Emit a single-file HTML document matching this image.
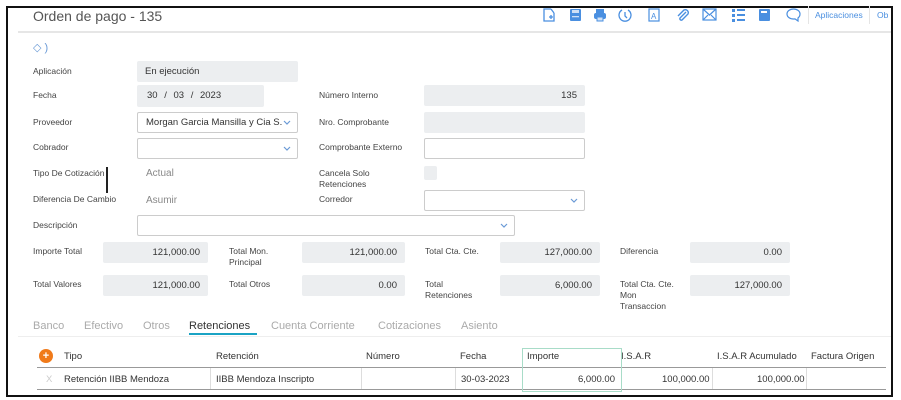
<!DOCTYPE html>
<html><head><meta charset="utf-8"><style>
*{margin:0;padding:0;box-sizing:border-box}
body{width:901px;height:400px;background:#fff;font-family:"Liberation Sans",sans-serif;position:relative;overflow:hidden;color:#333}
.a{position:absolute;white-space:nowrap}
.frame{position:absolute;left:6px;top:6px;width:887px;height:391px;border:2px solid #111}
.lb{position:absolute;font-size:8.5px;color:#444;line-height:11px;white-space:nowrap}
.g{position:absolute;background:#eceef0;border-radius:2px;font-size:9.5px;color:#333;line-height:21px;padding:0 8px;white-space:nowrap;overflow:hidden}
.w{position:absolute;background:#fff;border:1px solid #ccc;border-radius:2px;font-size:9.5px;line-height:19px;padding:0 8px;white-space:nowrap;overflow:hidden}
.r{text-align:right}
.chev{position:absolute;right:6px;top:7px}
.ic{position:absolute;top:8px}
.tab{position:absolute;top:320px;font-size:11px;color:#aaa}
.th{position:absolute;top:351px;font-size:9.5px;color:#333}
.td{position:absolute;top:374px;font-size:9.5px;color:#333}
</style></head><body>
<div class="frame"></div>
<div class="a" style="left:33px;top:8px;font-size:14px;color:#555">Orden de pago - 135</div>
<div class="a" style="left:18px;top:31px;width:873px;height:2px;background:#e6e6e6"></div>
<svg class="ic" style="left:543px" width="13" height="14" viewBox="0 0 13 14" fill="none" stroke="#4a8fe0" stroke-width="1.3"><path d="M8 1H1v12h10V5M8 1l3 4M6 9h4M8 7v4"/></svg>
<svg class="ic" style="left:569px" width="13" height="14" viewBox="0 0 13 14"><rect x="1" y="1" width="11" height="12" rx="1" fill="#4a8fe0"/><rect x="3" y="2" width="7" height="3" fill="#cfe0f6"/><rect x="3" y="8" width="7" height="1.3" fill="#cfe0f6"/></svg>
<svg class="ic" style="left:593px" width="14" height="14" viewBox="0 0 14 14"><rect x="3" y="1" width="8" height="4" fill="#4a8fe0"/><rect x="1" y="5" width="12" height="6" rx="2" fill="#4a8fe0"/><rect x="4" y="9" width="6" height="4" fill="#cfe0f6" stroke="#4a8fe0"/></svg>
<svg class="ic" style="left:618px" width="14" height="14" viewBox="0 0 14 14" fill="none" stroke="#4a8fe0" stroke-width="1.3"><path d="M4 2a6 6 0 1 0 6 0M7 4v4l2 2"/></svg>
<svg class="ic" style="left:648px" width="12" height="14" viewBox="0 0 12 14" fill="none" stroke="#4a8fe0" stroke-width="1.2"><rect x="1" y="1" width="10" height="12"/><text x="3" y="11" font-size="8" fill="#4a8fe0" stroke="none" font-family="Liberation Sans">A</text></svg>
<svg class="ic" style="left:676px" width="14" height="14" viewBox="0 0 14 14" fill="none" stroke="#4a8fe0" stroke-width="1.4"><path d="M10 4L4 10a1.5 1.5 0 0 0 2 2l6-6a3 3 0 0 0-4-4L2 8"/></svg>
<svg class="ic" style="left:702px" width="15" height="13" viewBox="0 0 15 13" fill="none" stroke="#4a8fe0" stroke-width="1.2"><rect x="1" y="1" width="13" height="11"/><path d="M1 1l6.5 6L14 1M1 12l5-5M14 12l-5-5"/></svg>
<svg class="ic" style="left:731px" width="14" height="14" viewBox="0 0 14 14" fill="#4a8fe0"><rect x="1" y="1" width="3" height="3"/><rect x="1" y="6" width="3" height="3"/><rect x="1" y="11" width="3" height="3"/><rect x="6" y="6" width="8" height="2"/><rect x="6" y="11" width="8" height="2"/><rect x="6" y="1" width="8" height="2"/></svg>
<svg class="ic" style="left:758px" width="13" height="14" viewBox="0 0 13 14"><rect x="1" y="1" width="11" height="12" rx="1" fill="#4a8fe0"/><rect x="3" y="3" width="6" height="2" fill="#fff"/></svg>
<svg class="ic" style="left:786px" width="15" height="14" viewBox="0 0 15 14" fill="none" stroke="#4a8fe0" stroke-width="1.2"><path d="M7.5 1C4 1 1 3 1 6s3 5 6.5 5c.5 0 1 0 1.5-.1L12 13v-3c1.3-1 2-2.5 2-4 0-3-3-5-6.5-5z"/></svg>
<div class="a" style="left:808px;top:6px;width:1px;height:18px;background:#e5e5e5"></div>
<div class="a" style="left:815px;top:10px;font-size:8.5px;color:#4a8fe0">Aplicaciones</div>
<div class="a" style="left:869px;top:6px;width:1px;height:18px;background:#e5e5e5"></div>
<div class="a" style="left:877px;top:10px;font-size:8.5px;color:#4a8fe0">Ob</div>
<div class="a" style="left:33px;top:41px;font-size:11px;color:#6a9ad6">&#9671; )</div>

<div class="lb" style="left:33px;top:66px">Aplicación</div>
<div class="g" style="left:137px;top:61px;width:161px;height:21px">En ejecución</div>
<div class="lb" style="left:33px;top:90px">Fecha</div>
<div class="g" style="left:137px;top:85px;width:127px;height:22px;padding-left:10px;word-spacing:4px">30 / 03 / 2023</div>
<div class="lb" style="left:319px;top:90px">Número Interno</div>
<div class="g r" style="left:424px;top:85px;width:161px;height:21px">135</div>
<div class="lb" style="left:33px;top:117px">Proveedor</div>
<div class="w" style="left:137px;top:112px;width:161px;height:21px;padding-right:20px">Morgan Garcia Mansilla y Cia S.<svg class="chev" width="8" height="6" viewBox="0 0 8 6"><path d="M1 1l3 3 3-3" fill="none" stroke="#6a9ad6" stroke-width="1.2"/></svg></div>
<div class="lb" style="left:319px;top:117px">Nro. Comprobante</div>
<div class="g" style="left:424px;top:112px;width:161px;height:21px"></div>
<div class="lb" style="left:33px;top:142px">Cobrador</div>
<div class="w" style="left:137px;top:138px;width:161px;height:21px"><svg class="chev" width="8" height="6" viewBox="0 0 8 6"><path d="M1 1l3 3 3-3" fill="none" stroke="#6a9ad6" stroke-width="1.2"/></svg></div>
<div class="lb" style="left:319px;top:142px">Comprobante Externo</div>
<div class="w" style="left:424px;top:138px;width:161px;height:21px"></div>
<div class="lb" style="left:33px;top:168px">Tipo De Cotización</div>
<div class="a" style="left:106px;top:167px;width:2px;height:26px;background:#222"></div>
<div class="a" style="left:146px;top:168px;font-size:10px;color:#888">Actual</div>
<div class="lb" style="left:319px;top:168px">Cancela Solo<br>Retenciones</div>
<div class="g" style="left:424px;top:166px;width:13px;height:14px;padding:0"></div>
<div class="lb" style="left:33px;top:194px">Diferencia De Cambio</div>
<div class="a" style="left:146px;top:195px;font-size:10px;color:#888">Asumir</div>
<div class="lb" style="left:319px;top:194px">Corredor</div>
<div class="w" style="left:424px;top:190px;width:161px;height:21px"><svg class="chev" width="8" height="6" viewBox="0 0 8 6"><path d="M1 1l3 3 3-3" fill="none" stroke="#6a9ad6" stroke-width="1.2"/></svg></div>
<div class="lb" style="left:33px;top:220px">Descripción</div>
<div class="w" style="left:137px;top:215px;width:378px;height:21px"><svg class="chev" width="8" height="6" viewBox="0 0 8 6"><path d="M1 1l3 3 3-3" fill="none" stroke="#6a9ad6" stroke-width="1.2"/></svg></div>

<div class="lb" style="left:33px;top:246px">Importe Total</div>
<div class="g r" style="left:103px;top:242px;width:105px;height:21px">121,000.00</div>
<div class="lb" style="left:229px;top:246px">Total Mon.<br>Principal</div>
<div class="g r" style="left:302px;top:242px;width:103px;height:21px">121,000.00</div>
<div class="lb" style="left:425px;top:246px">Total Cta. Cte.</div>
<div class="g r" style="left:500px;top:242px;width:100px;height:21px">127,000.00</div>
<div class="lb" style="left:620px;top:246px">Diferencia</div>
<div class="g r" style="left:690px;top:242px;width:100px;height:21px">0.00</div>
<div class="lb" style="left:33px;top:279px">Total Valores</div>
<div class="g r" style="left:103px;top:275px;width:105px;height:21px">121,000.00</div>
<div class="lb" style="left:229px;top:279px">Total Otros</div>
<div class="g r" style="left:302px;top:275px;width:103px;height:21px">0.00</div>
<div class="lb" style="left:425px;top:279px">Total<br>Retenciones</div>
<div class="g r" style="left:500px;top:275px;width:100px;height:21px">6,000.00</div>
<div class="lb" style="left:620px;top:279px">Total Cta. Cte.<br>Mon<br>Transaccion</div>
<div class="g r" style="left:690px;top:275px;width:100px;height:21px">127,000.00</div>

<div class="tab" style="left:33px">Banco</div>
<div class="tab" style="left:84px">Efectivo</div>
<div class="tab" style="left:143px">Otros</div>
<div class="tab" style="left:189px;color:#333">Retenciones</div>
<div class="a" style="left:189px;top:333px;width:68px;height:2px;background:#1aa3c4"></div>
<div class="tab" style="left:271px">Cuenta Corriente</div>
<div class="tab" style="left:378px">Cotizaciones</div>
<div class="tab" style="left:461px">Asiento</div>
<div class="a" style="left:18px;top:336px;width:873px;height:1px;background:#eee"></div>

<div class="a" style="left:39px;top:349px;width:14px;height:14px;border-radius:50%;background:#f07a1a;color:#fff;font-size:11px;line-height:14px;text-align:center;font-weight:bold">+</div>
<div class="th" style="left:64px">Tipo</div>
<div class="th" style="left:216px">Retención</div>
<div class="th" style="left:366px">Número</div>
<div class="th" style="left:460px">Fecha</div>
<div class="th" style="left:527px">Importe</div>
<div class="th" style="left:621px">I.S.A.R</div>
<div class="th" style="left:717px">I.S.A.R Acumulado</div>
<div class="th" style="left:811px">Factura Origen</div>
<div class="a" style="left:37px;top:367px;width:849px;height:1px;background:#999"></div>
<div class="a" style="left:37px;top:389px;width:849px;height:1px;background:#999"></div>
<div class="a" style="left:210px;top:368px;width:1px;height:21px;background:#ddd"></div>
<div class="a" style="left:361px;top:368px;width:1px;height:21px;background:#ddd"></div>
<div class="a" style="left:455px;top:368px;width:1px;height:21px;background:#ddd"></div>
<div class="a" style="left:712px;top:368px;width:1px;height:21px;background:#ddd"></div>
<div class="a" style="left:806px;top:368px;width:1px;height:21px;background:#ddd"></div>
<div class="a" style="left:522px;top:348px;width:100px;height:44px;border:1px solid #a8dcc8"></div>
<div class="td" style="left:46px;color:#ccc">X</div>
<div class="td" style="left:64px">Retención IIBB Mendoza</div>
<div class="td" style="left:216px">IIBB Mendoza Inscripto</div>
<div class="td" style="left:461px">30-03-2023</div>
<div class="td" style="left:578px">6,000.00</div>
<div class="td" style="left:662px">100,000.00</div>
<div class="td" style="left:757px">100,000.00</div>
</body></html>
